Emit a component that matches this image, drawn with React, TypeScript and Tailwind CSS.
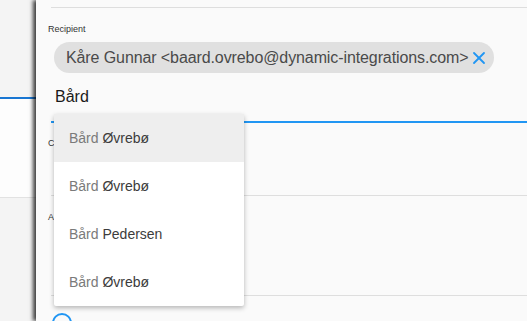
import { X } from 'lucide-react'

const options = ['Øvrebø', 'Øvrebø', 'Pedersen', 'Øvrebø']

function Backdrop() {
  return (
    <div className="w-[36px] shrink-0 flex flex-col">
      <div className="h-[97px] shrink-0 bg-[#f4f4f4]" />
      <div className="h-[2px] shrink-0 bg-[#1976d2]" />
      <div className="h-[99px] shrink-0 bg-[#fdfdfd] border-b border-[#e2e2e2]" />
      <div className="flex-1 bg-[#f4f4f4]" />
    </div>
  )
}

function Dropdown() {
  return (
    <div className="absolute left-[18px] top-[114px] w-[190px] bg-white shadow-[0_2px_5px_rgba(0,0,0,0.28)] rounded-[2px] z-20">
      {options.map((last, i) => (
        <div
          key={i}
          className={`h-[48px] flex items-center pl-[15px] text-[14px] ${i === 0 ? 'bg-[#eeeeee]' : ''}`}
        >
          <span className="text-[#7a7a7a]">Bård</span>
          <span className="text-[#3c3c3c]">&nbsp;{last}</span>
        </div>
      ))}
    </div>
  )
}

export default function App() {
  return (
    <div
      className="w-[527px] h-[321px] overflow-hidden flex"
      style={{ fontFamily: '"Liberation Sans", Arial, sans-serif' }}
    >
      <Backdrop />
      <div className="relative flex-1 bg-[#fafafa] shadow-[-3px_0_4px_rgba(0,0,0,0.75)] z-10">
        <div className="h-[7px]" />
        <div className="ml-[15px] h-px bg-[#dedede]" />
        <div className="ml-[12px] mt-[16px] text-[9px] leading-[10px] text-[#333]">Recipient</div>
        <div className="ml-[18px] mt-[8px] h-[31px] w-[440px] rounded-full bg-[#e0e0e0] flex items-center pl-[12px] pr-[6px]">
          <span className="text-[16px] text-[#4a4a4a] whitespace-nowrap tracking-[-0.1px]">
            Kåre Gunnar &lt;baard.ovrebo@dynamic-integrations.com&gt;
          </span>
          <X className="ml-[1px] w-[20px] h-[20px] text-[#2196f3] shrink-0" strokeWidth={2.2} />
        </div>
        <div className="ml-[19px] mt-[14px] text-[16px] leading-[20px] text-[#1a1a1a]">Bård</div>
        <div className="ml-[15px] mt-[14px] h-[2px] bg-[#2196f3]" />
        <div className="ml-[12px] mt-[15px] text-[9px] leading-[10px] text-[#333]">C</div>
        <div className="ml-[15px] mt-[47px] h-px bg-[#dedede]" />
        <div className="ml-[12px] mt-[16px] text-[9px] leading-[10px] text-[#333]">A</div>
        <div className="ml-[15px] mt-[73px] h-px bg-[#dedede]" />
        <div className="ml-[16px] mt-[17px] w-[20px] h-[20px] rounded-full border-2 border-[#2196f3]" />
        <Dropdown />
      </div>
    </div>
  )
}
